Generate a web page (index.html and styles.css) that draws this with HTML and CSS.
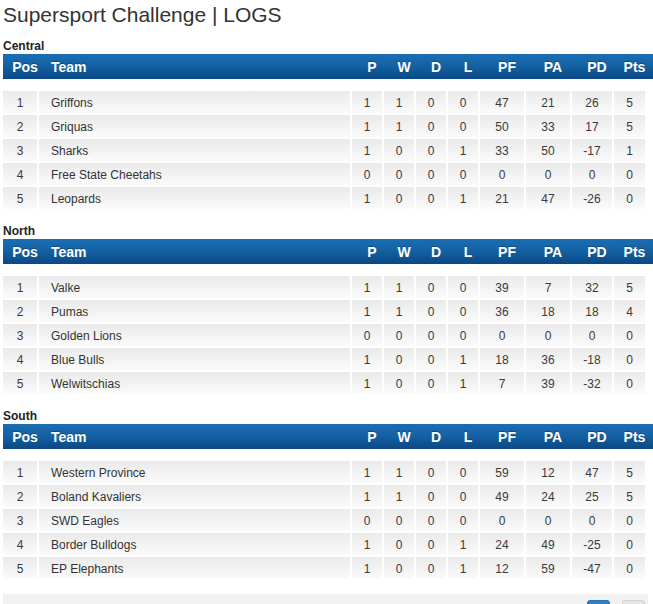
FILE: index.html
```html
<!DOCTYPE html>
<html>
<head>
<meta charset="utf-8">
<link rel="stylesheet" href="styles.css">
</head>
<body>
<div class="page">
  <h1 class="title">Supersport Challenge | LOGS</h1>

  <section class="group">
    <div class="group-name">Central</div>
    <div class="head">
      <span>Pos</span><span class="left">Team</span><span>P</span><span>W</span><span>D</span><span>L</span><span>PF</span><span>PA</span><span>PD</span><span>Pts</span>
    </div>
    <div class="rows">
      <div class="row"><span>1</span><span class="left">Griffons</span><span>1</span><span>1</span><span>0</span><span>0</span><span>47</span><span>21</span><span>26</span><span>5</span></div>
      <div class="row"><span>2</span><span class="left">Griquas</span><span>1</span><span>1</span><span>0</span><span>0</span><span>50</span><span>33</span><span>17</span><span>5</span></div>
      <div class="row"><span>3</span><span class="left">Sharks</span><span>1</span><span>0</span><span>0</span><span>1</span><span>33</span><span>50</span><span>-17</span><span>1</span></div>
      <div class="row"><span>4</span><span class="left">Free State Cheetahs</span><span>0</span><span>0</span><span>0</span><span>0</span><span>0</span><span>0</span><span>0</span><span>0</span></div>
      <div class="row"><span>5</span><span class="left">Leopards</span><span>1</span><span>0</span><span>0</span><span>1</span><span>21</span><span>47</span><span>-26</span><span>0</span></div>
    </div>
  </section>

  <section class="group">
    <div class="group-name">North</div>
    <div class="head">
      <span>Pos</span><span class="left">Team</span><span>P</span><span>W</span><span>D</span><span>L</span><span>PF</span><span>PA</span><span>PD</span><span>Pts</span>
    </div>
    <div class="rows">
      <div class="row"><span>1</span><span class="left">Valke</span><span>1</span><span>1</span><span>0</span><span>0</span><span>39</span><span>7</span><span>32</span><span>5</span></div>
      <div class="row"><span>2</span><span class="left">Pumas</span><span>1</span><span>1</span><span>0</span><span>0</span><span>36</span><span>18</span><span>18</span><span>4</span></div>
      <div class="row"><span>3</span><span class="left">Golden Lions</span><span>0</span><span>0</span><span>0</span><span>0</span><span>0</span><span>0</span><span>0</span><span>0</span></div>
      <div class="row"><span>4</span><span class="left">Blue Bulls</span><span>1</span><span>0</span><span>0</span><span>1</span><span>18</span><span>36</span><span>-18</span><span>0</span></div>
      <div class="row"><span>5</span><span class="left">Welwitschias</span><span>1</span><span>0</span><span>0</span><span>1</span><span>7</span><span>39</span><span>-32</span><span>0</span></div>
    </div>
  </section>

  <section class="group">
    <div class="group-name">South</div>
    <div class="head">
      <span>Pos</span><span class="left">Team</span><span>P</span><span>W</span><span>D</span><span>L</span><span>PF</span><span>PA</span><span>PD</span><span>Pts</span>
    </div>
    <div class="rows">
      <div class="row"><span>1</span><span class="left">Western Province</span><span>1</span><span>1</span><span>0</span><span>0</span><span>59</span><span>12</span><span>47</span><span>5</span></div>
      <div class="row"><span>2</span><span class="left">Boland Kavaliers</span><span>1</span><span>1</span><span>0</span><span>0</span><span>49</span><span>24</span><span>25</span><span>5</span></div>
      <div class="row"><span>3</span><span class="left">SWD Eagles</span><span>0</span><span>0</span><span>0</span><span>0</span><span>0</span><span>0</span><span>0</span><span>0</span></div>
      <div class="row"><span>4</span><span class="left">Border Bulldogs</span><span>1</span><span>0</span><span>0</span><span>1</span><span>24</span><span>49</span><span>-25</span><span>0</span></div>
      <div class="row"><span>5</span><span class="left">EP Elephants</span><span>1</span><span>0</span><span>0</span><span>1</span><span>12</span><span>59</span><span>-47</span><span>0</span></div>
    </div>
  </section>

  <div class="pager">
    <span class="pg pg-active"></span>
    <span class="pg"></span>
  </div>
</div>
</body>
</html>
```

FILE: styles.css
```css
html, body {
  margin: 0;
  padding: 0;
  background: #fff;
  overflow: hidden;
}

body {
  font-family: "Liberation Sans", Arial, sans-serif;
  color: #333;
}

.page {
  padding-left: 3px;
}

.title {
  margin: 0;
  padding-top: 3px;
  font-size: 21px;
  line-height: 24px;
  font-weight: normal;
  color: #333;
}

.group {
  margin-top: 12px;
  margin-bottom: 15px;
}

.group + .group {
  margin-top: 0;
}

.group-name {
  font-size: 12px;
  line-height: 14px;
  font-weight: bold;
  color: #222;
  margin-bottom: 1px;
}

.head,
.row {
  display: grid;
  grid-template-columns: 34px 311px 30px 30px 30px 30px 44px 44px 40px 31px;
  column-gap: 2px;
}

.head {
  height: 25px;
  padding-left: 5px;
  align-items: center;
  background: linear-gradient(to bottom, #1b6eb3 0%, #1462a4 45%, #0a4884 100%);
  color: #fff;
  font-size: 14px;
  font-weight: bold;
  text-shadow: 0 -1px 0 rgba(0, 0, 0, 0.25);
  margin-bottom: 12px;
}

.head span {
  text-align: center;
  white-space: nowrap;
}

.head span.left {
  text-align: left;
  padding-left: 7px;
}

.rows {
  display: flex;
  flex-direction: column;
  gap: 2px;
  width: 642px;
}

.row span {
  height: 22px;
  box-sizing: border-box;
  padding-top: 1px;
  line-height: 22px;
  font-size: 12px;
  text-align: center;
  color: #3a3a3a;
  background: linear-gradient(to bottom, #eaeaea 0%, #f3f3f3 55%, #fbfbfb 100%);
}

.row span.left {
  text-align: left;
  padding-left: 12px;
  color: #333;
}

.pager {
  height: 20px;
  width: 645px;
  background: #f1f1f1;
  display: flex;
  justify-content: flex-end;
  align-items: flex-start;
  gap: 12px;
  padding-top: 6px;
  box-sizing: border-box;
  padding-right: 3px;
}

.pg {
  display: block;
  width: 23px;
  height: 18px;
  border-radius: 3px;
  background: #e6e6e6;
  border: 1px solid #d0d0d0;
  box-sizing: border-box;
}

.pg-active {
  background: #2f7fc4;
  border-color: #2a72b0;
}
```
